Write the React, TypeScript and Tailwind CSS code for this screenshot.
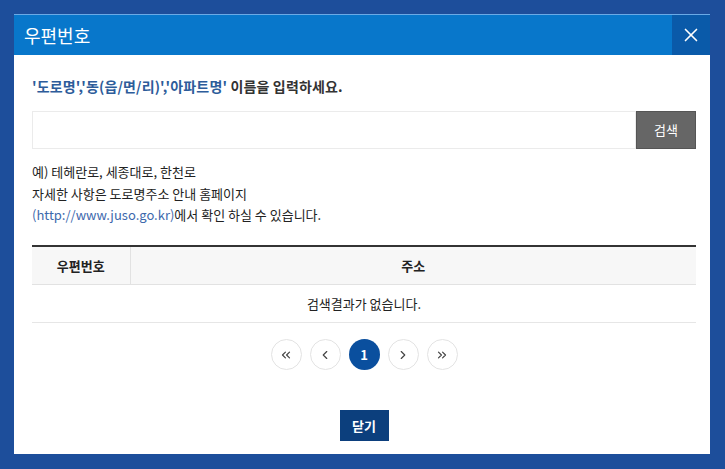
import { ChevronLeft, ChevronRight, ChevronsLeft, ChevronsRight, X } from "lucide-react"

const font = { fontFamily: '"Noto Sans CJK KR", "Noto Sans", sans-serif' }

const App = () => {
  return (
    <div className="w-[725px] h-[469px] bg-[#1d4e9b] pt-[14px] pl-[14px]" style={font}>
      <div className="w-[696px] h-[440px] bg-white flex flex-col">
        {/* Header */}
        <div className="h-[41px] bg-[#0877cb] border-t border-[#6aaae6] flex items-center justify-between">
          <h1 className="pl-[10px] text-white text-[18px] leading-none">우편번호</h1>
          <button className="w-[38px] h-full bg-[#0a5aa9] flex items-center justify-center text-white">
            <X size={22} strokeWidth={1.8} />
          </button>
        </div>

        {/* Body */}
        <div className="pl-[18px] pr-[14px] pt-[21px] flex flex-col">
          <p className="text-[14px] leading-[20px] font-bold text-[#333] tracking-[0.15px]">
            <span className="text-[#2d5c9a]">'도로명','동(읍/면/리)','아파트명'</span> 이름을 입력하세요.
          </p>

          <div className="mt-[15px] flex h-[38px]">
            <input className="flex-1 border border-[#ebebeb] outline-none px-3 text-[13px]" />
            <button className="w-[60px] bg-[#666666] border border-[#555] text-white text-[13px]">검색</button>
          </div>

          <div className="mt-[12px] text-[13px] leading-[21.5px] text-[#222]">
            <p>예) 테헤란로, 세종대로, 한천로</p>
            <p>자세한 사항은 도로명주소 안내 홈페이지</p>
            <p>
              <span className="text-[#3d69ad]">(http://www.juso.go.kr)</span>에서 확인 하실 수 있습니다.
            </p>
          </div>

          {/* Table */}
          <table className="mt-[19px] w-full border-collapse text-[13px] text-[#222]">
            <thead>
              <tr className="border-t-2 border-[#333] bg-[#f7f7f7] border-b border-b-[#e2e2e2]">
                <th className="w-[98px] h-[39px] font-bold border-r border-[#e2e2e2]">우편번호</th>
                <th className="font-bold">주소</th>
              </tr>
            </thead>
            <tbody>
              <tr className="border-b border-[#e6e6e6]">
                <td colSpan={2} className="h-[38px] text-center">
                  검색결과가 없습니다.
                </td>
              </tr>
            </tbody>
          </table>

          {/* Pagination */}
          <div className="mt-[16px] flex justify-center gap-2">
            <button className="w-[31px] h-[31px] rounded-full border border-[#e3e3e3] flex items-center justify-center text-[#444]">
              <ChevronsLeft size={14} strokeWidth={2} />
            </button>
            <button className="w-[31px] h-[31px] rounded-full border border-[#e3e3e3] flex items-center justify-center text-[#444]">
              <ChevronLeft size={14} strokeWidth={2} />
            </button>
            <button className="w-[31px] h-[31px] rounded-full bg-[#0a4f9e] flex items-center justify-center text-white text-[13px] font-bold">
              1
            </button>
            <button className="w-[31px] h-[31px] rounded-full border border-[#e3e3e3] flex items-center justify-center text-[#444]">
              <ChevronRight size={14} strokeWidth={2} />
            </button>
            <button className="w-[31px] h-[31px] rounded-full border border-[#e3e3e3] flex items-center justify-center text-[#444]">
              <ChevronsRight size={14} strokeWidth={2} />
            </button>
          </div>

          <div className="mt-[40px] flex justify-center">
            <button className="w-[49px] h-[31px] bg-[#0c3f7d] text-white text-[13px] font-bold">닫기</button>
          </div>
        </div>
      </div>
    </div>
  )
}

export default App
